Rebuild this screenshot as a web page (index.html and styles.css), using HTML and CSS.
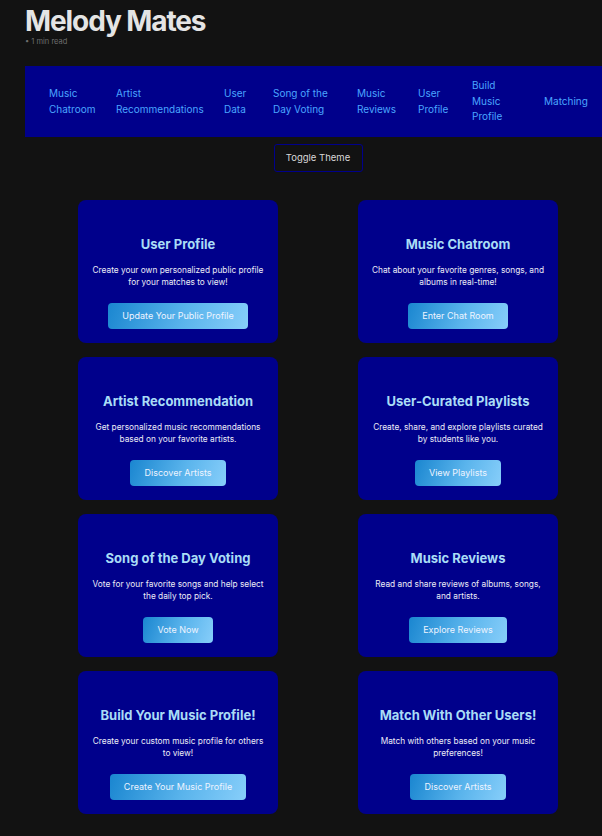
FILE: index.html
```html
<!DOCTYPE html>
<html lang="en">
<head>
<meta charset="utf-8">
<title>Melody Mates</title>
<link rel="stylesheet" href="styles.css">
</head>
<body>
<div class="page">
  <header class="header">
    <h1 class="title">Melody Mates</h1>
    <div class="meta">• 1 min read</div>
  </header>

  <nav class="nav">
    <a class="nav-link w-chat" href="#">Music Chatroom</a>
    <a class="nav-link w-artist" href="#">Artist Recommendations</a>
    <a class="nav-link w-data" href="#">User Data</a>
    <a class="nav-link w-song" href="#">Song of the Day Voting</a>
    <a class="nav-link w-reviews" href="#">Music Reviews</a>
    <a class="nav-link w-profile" href="#">User Profile</a>
    <a class="nav-link w-build" href="#">Build Music Profile</a>
    <a class="nav-link" href="#">Matching</a>
  </nav>

  <div class="toggle-row">
    <button class="toggle">Toggle Theme</button>
  </div>

  <main class="grid">
    <section class="card">
      <h3 class="card-title">User Profile</h3>
      <p class="card-text">Create your own personalized public profile for your matches to view!</p>
      <a class="card-btn" href="#">Update Your Public Profile</a>
    </section>
    <section class="card">
      <h3 class="card-title">Music Chatroom</h3>
      <p class="card-text">Chat about your favorite genres, songs, and albums in real-time!</p>
      <a class="card-btn" href="#">Enter Chat Room</a>
    </section>
    <section class="card">
      <h3 class="card-title">Artist Recommendation</h3>
      <p class="card-text">Get personalized music recommendations based on your favorite artists.</p>
      <a class="card-btn" href="#">Discover Artists</a>
    </section>
    <section class="card">
      <h3 class="card-title">User-Curated Playlists</h3>
      <p class="card-text">Create, share, and explore playlists curated by students like you.</p>
      <a class="card-btn" href="#">View Playlists</a>
    </section>
    <section class="card">
      <h3 class="card-title">Song of the Day Voting</h3>
      <p class="card-text">Vote for your favorite songs and help select the daily top pick.</p>
      <a class="card-btn" href="#">Vote Now</a>
    </section>
    <section class="card">
      <h3 class="card-title">Music Reviews</h3>
      <p class="card-text">Read and share reviews of albums, songs, and artists.</p>
      <a class="card-btn" href="#">Explore Reviews</a>
    </section>
    <section class="card">
      <h3 class="card-title">Build Your Music Profile!</h3>
      <p class="card-text">Create your custom music profile for others to view!</p>
      <a class="card-btn" href="#">Create Your Music Profile</a>
    </section>
    <section class="card">
      <h3 class="card-title">Match With Other Users!</h3>
      <p class="card-text">Match with others based on your music preferences!</p>
      <a class="card-btn" href="#">Discover Artists</a>
    </section>
  </main>
</div>
</body>
</html>
```

FILE: styles.css
```css
html {
  overflow: hidden;
  background: #121212;
}

body {
  margin: 0;
  background: #121212;
  font-family: Inter, "Noto Sans", "Liberation Sans", sans-serif;
  color: #e6e6e6;
}

.page {
  width: 586px;
  margin-left: 25px;
  padding-top: 7px;
}

.title {
  margin: 0;
  font-size: 28px;
  line-height: 28px;
  font-weight: 700;
  color: #e4e4e4;
  letter-spacing: -1.1px;
}

.meta {
  margin-top: 3px;
  font-size: 7.5px;
  line-height: 7px;
  color: #6e6e6e;
}

.nav {
  margin-top: 21px;
  background: #00008b;
  display: flex;
  align-items: center;
  padding: 12px 0 12px 24px;
  min-height: 47px;
}

.nav-link {
  flex: none;
  font-size: 10px;
  line-height: 15.5px;
  color: #4aa6ff;
  text-decoration: none;
}

.w-chat { width: 67px; }
.w-artist { width: 108px; }
.w-data { width: 49px; }
.w-song { width: 84px; }
.w-reviews { width: 61px; }
.w-profile { width: 54px; }
.w-build { width: 72px; padding-right: 30px; }

.w-chat, .w-artist, .w-data, .w-song, .w-reviews, .w-profile {
  padding-right: 16px;
}

.w-chat, .w-artist, .w-data, .w-song, .w-reviews, .w-profile, .w-build {
  box-sizing: border-box;
}

.toggle-row {
  display: flex;
  justify-content: center;
  margin-top: 7px;
}

.toggle {
  background: transparent;
  border: 1px solid #00008b;
  border-radius: 3px;
  color: #d8d8d8;
  font-family: inherit;
  font-size: 9.5px;
  line-height: 12px;
  padding: 7px 0;
  height: 28px;
  width: 89px;
  white-space: nowrap;
}

.grid {
  display: grid;
  grid-template-columns: 200px 200px;
  justify-content: center;
  column-gap: 80px;
  row-gap: 14px;
  margin-top: 28px;
}

.card {
  background: #00008b;
  border-radius: 8px;
  padding: 36px 12px 14px;
  text-align: center;
  display: flex;
  flex-direction: column;
  align-items: center;
}

.card-title {
  margin: 0;
  font-size: 13px;
  line-height: 17px;
  font-weight: 700;
  color: #a9dcf6;
}

.card-text {
  margin: 11px 0 0;
  font-size: 8.3px;
  line-height: 12px;
  color: #ececf6;
}

.card-btn {
  margin-top: 15px;
  display: inline-block;
  height: 26px;
  line-height: 26px;
  padding: 0 14px;
  border-radius: 4px;
  font-size: 9px;
  color: #eef4ff;
  text-decoration: none;
  background: linear-gradient(110deg, #1a86d0 0%, #5ab4ec 55%, #87cefa 100%);
  box-sizing: border-box;
}
```
